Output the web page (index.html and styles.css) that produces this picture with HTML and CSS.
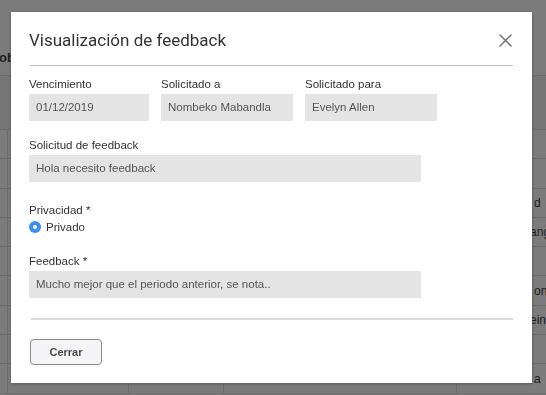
FILE: index.html
```html
<!DOCTYPE html>
<html lang="es">
<head>
<meta charset="utf-8">
<title>Visualización de feedback</title>
<link rel="stylesheet" href="styles.css">
</head>
<body>
<div class="page">
  <div class="page-head"><span class="head-text">ob</span></div>
  <div class="toolbar"></div>
  <div class="grid">
    <div class="cell"></div><div class="cell"></div><div class="cell"></div><div class="cell"></div><div class="cell"></div>
    <div class="cell"></div><div class="cell"></div><div class="cell"></div><div class="cell"></div><div class="cell"></div>
    <div class="cell"></div><div class="cell"></div><div class="cell"></div><div class="cell"></div><div class="cell"><span class="frag">d</span></div>
    <div class="cell"></div><div class="cell"></div><div class="cell"></div><div class="cell"></div><div class="cell"><span class="frag frag-wide">ang</span></div>
    <div class="cell"></div><div class="cell"></div><div class="cell"></div><div class="cell"></div><div class="cell"></div>
    <div class="cell"></div><div class="cell"></div><div class="cell"></div><div class="cell"></div><div class="cell"><span class="frag">on</span></div>
    <div class="cell"></div><div class="cell"></div><div class="cell"></div><div class="cell"></div><div class="cell"><span class="frag frag-wide">ein</span></div>
    <div class="cell"></div><div class="cell"></div><div class="cell"></div><div class="cell"></div><div class="cell"></div>
    <div class="cell"></div><div class="cell"></div><div class="cell"></div><div class="cell"></div><div class="cell"><span class="frag">a</span></div>
  </div>
</div>

<div class="overlay">
  <div class="modal">
    <div class="modal-header">
      <h2 class="title">Visualización de feedback</h2>
      <button class="close" aria-label="Cerrar">
        <svg width="13" height="13" viewBox="0 0 13 13"><path d="M0.5 0.5 L12.5 12.5 M12.5 0.5 L0.5 12.5" stroke="#707070" stroke-width="1.3" fill="none"/></svg>
      </button>
    </div>
    <div class="divider-top"></div>
    <div class="modal-body">
      <div class="row3">
        <div class="field f-date"><label class="lbl">Vencimiento</label><div class="input">01/12/2019</div></div>
        <div class="field f-mid"><label class="lbl">Solicitado a</label><div class="input">Nombeko Mabandla</div></div>
        <div class="field f-mid"><label class="lbl">Solicitado para</label><div class="input">Evelyn Allen</div></div>
      </div>
      <div class="field wide sec"><label class="lbl">Solicitud de feedback</label><div class="input">Hola necesito feedback</div></div>
      <div class="field priv"><label class="lbl">Privacidad *</label>
        <div class="radio"><span class="radio-dot"></span><span>Privado</span></div>
      </div>
      <div class="field wide fb"><label class="lbl">Feedback *</label><div class="input">Mucho mejor que el periodo anterior, se nota..</div></div>
    </div>
    <div class="divider-bottom"></div>
    <div class="modal-footer"><button class="btn">Cerrar</button></div>
  </div>
</div>
</body>
</html>
```

FILE: styles.css
```css
* { box-sizing: border-box; }
html, body { margin: 0; padding: 0; }
body {
  width: 546px;
  height: 395px;
  overflow: hidden;
  background: #7b7b7b;
  font-family: "Liberation Sans", Arial, sans-serif;
  color: #333;
}

/* background page (dimmed) */
.page { width: 546px; }
.page-head {
  height: 76px;
  border-bottom: 1px solid #6c6c6c;
  padding-top: 50px;
}
.head-text {
  display: block;
  margin-left: -1px;
  font-weight: bold;
  font-size: 13px;
  color: #1e1e1e;
}
.toolbar {
  height: 54px;
  background: #767676;
  border-bottom: 1px solid #6c6c6c;
}
.grid {
  display: grid;
  grid-template-columns: 7px 121px 95px 233px 1fr;
  grid-auto-rows: 29.3px;
}
.cell {
  border-bottom: 1px solid #6c6c6c;
  border-left: 1px solid #6c6c6c;
  display: flex;
  align-items: center;
  overflow: hidden;
}
.cell:nth-child(5n+1) { border-left: none; }
.frag {
  padding-left: 77px;
  font-size: 12px;
  color: #1e1e1e;
  white-space: nowrap;
}
.frag-wide { padding-left: 73px; }

/* overlay + modal */
.overlay {
  position: fixed;
  inset: 0;
  padding: 12px 14px 12px 11px;
}
.modal {
  width: 521px;
  height: 371px;
  background: #fff;
  box-shadow: 0 1px 3px rgba(0,0,0,0.25);
  padding: 0 19px 0 18px;
  display: flex;
  flex-direction: column;
}
.modal-header {
  display: flex;
  align-items: center;
  justify-content: space-between;
  padding-top: 16px;
  height: 53px;
  padding-bottom: 13px;
}
.title {
  margin: 0;
  font-family: Roboto, "Liberation Sans", sans-serif;
  font-weight: 400;
  font-size: 17px;
  line-height: 24px;
  color: #333;
}
.close {
  border: none;
  background: transparent;
  padding: 0;
  margin-right: 1px;
  width: 13px;
  height: 13px;
  display: flex;
}
.divider-top {
  height: 1px;
  background: #bcbcc6;
  margin-left: 1px;
}
.modal-body {
  padding-top: 11px;
  display: flex;
  flex-direction: column;
}
.row3 {
  display: flex;
  gap: 12px;
}
.field { display: flex; flex-direction: column; }
.f-date { width: 120px; }
.f-mid { width: 132px; }
.wide { width: 392px; }
.lbl {
  font-size: 11.5px;
  line-height: 14px;
  color: #333;
  margin-bottom: 3px;
}
.input {
  height: 27px;
  line-height: 27px;
  background: #e4e4e4;
  padding-left: 7px;
  font-size: 11.5px;
  color: #555;
  white-space: nowrap;
}
.sec { margin-top: 17px; }
.priv { margin-top: 21px; }
.priv .lbl { margin-bottom: 2px; }
.radio {
  display: flex;
  align-items: center;
  gap: 5px;
  height: 16px;
  font-size: 11.5px;
  color: #333;
}
.radio-dot {
  width: 12px;
  height: 12px;
  border-radius: 50%;
  background: #3b8ff5;
  display: flex;
  align-items: center;
  justify-content: center;
}
.radio-dot::after {
  content: "";
  width: 4px;
  height: 4px;
  border-radius: 50%;
  background: #fff;
}
.fb { margin-top: 19px; }
.divider-bottom {
  margin-top: 20px;
  margin-left: 2px;
  height: 2px;
  background: #dcdcdc;
}
.modal-footer {
  padding-top: 19px;
}
.btn {
  margin-left: 1px;
  width: 72px;
  height: 26px;
  border: 1px solid #8c8c8c;
  border-radius: 4px;
  background: #f4f4f6;
  font-family: "Liberation Sans", Arial, sans-serif;
  font-weight: bold;
  font-size: 11px;
  color: #4a4a4a;
  padding: 0;
}
```
